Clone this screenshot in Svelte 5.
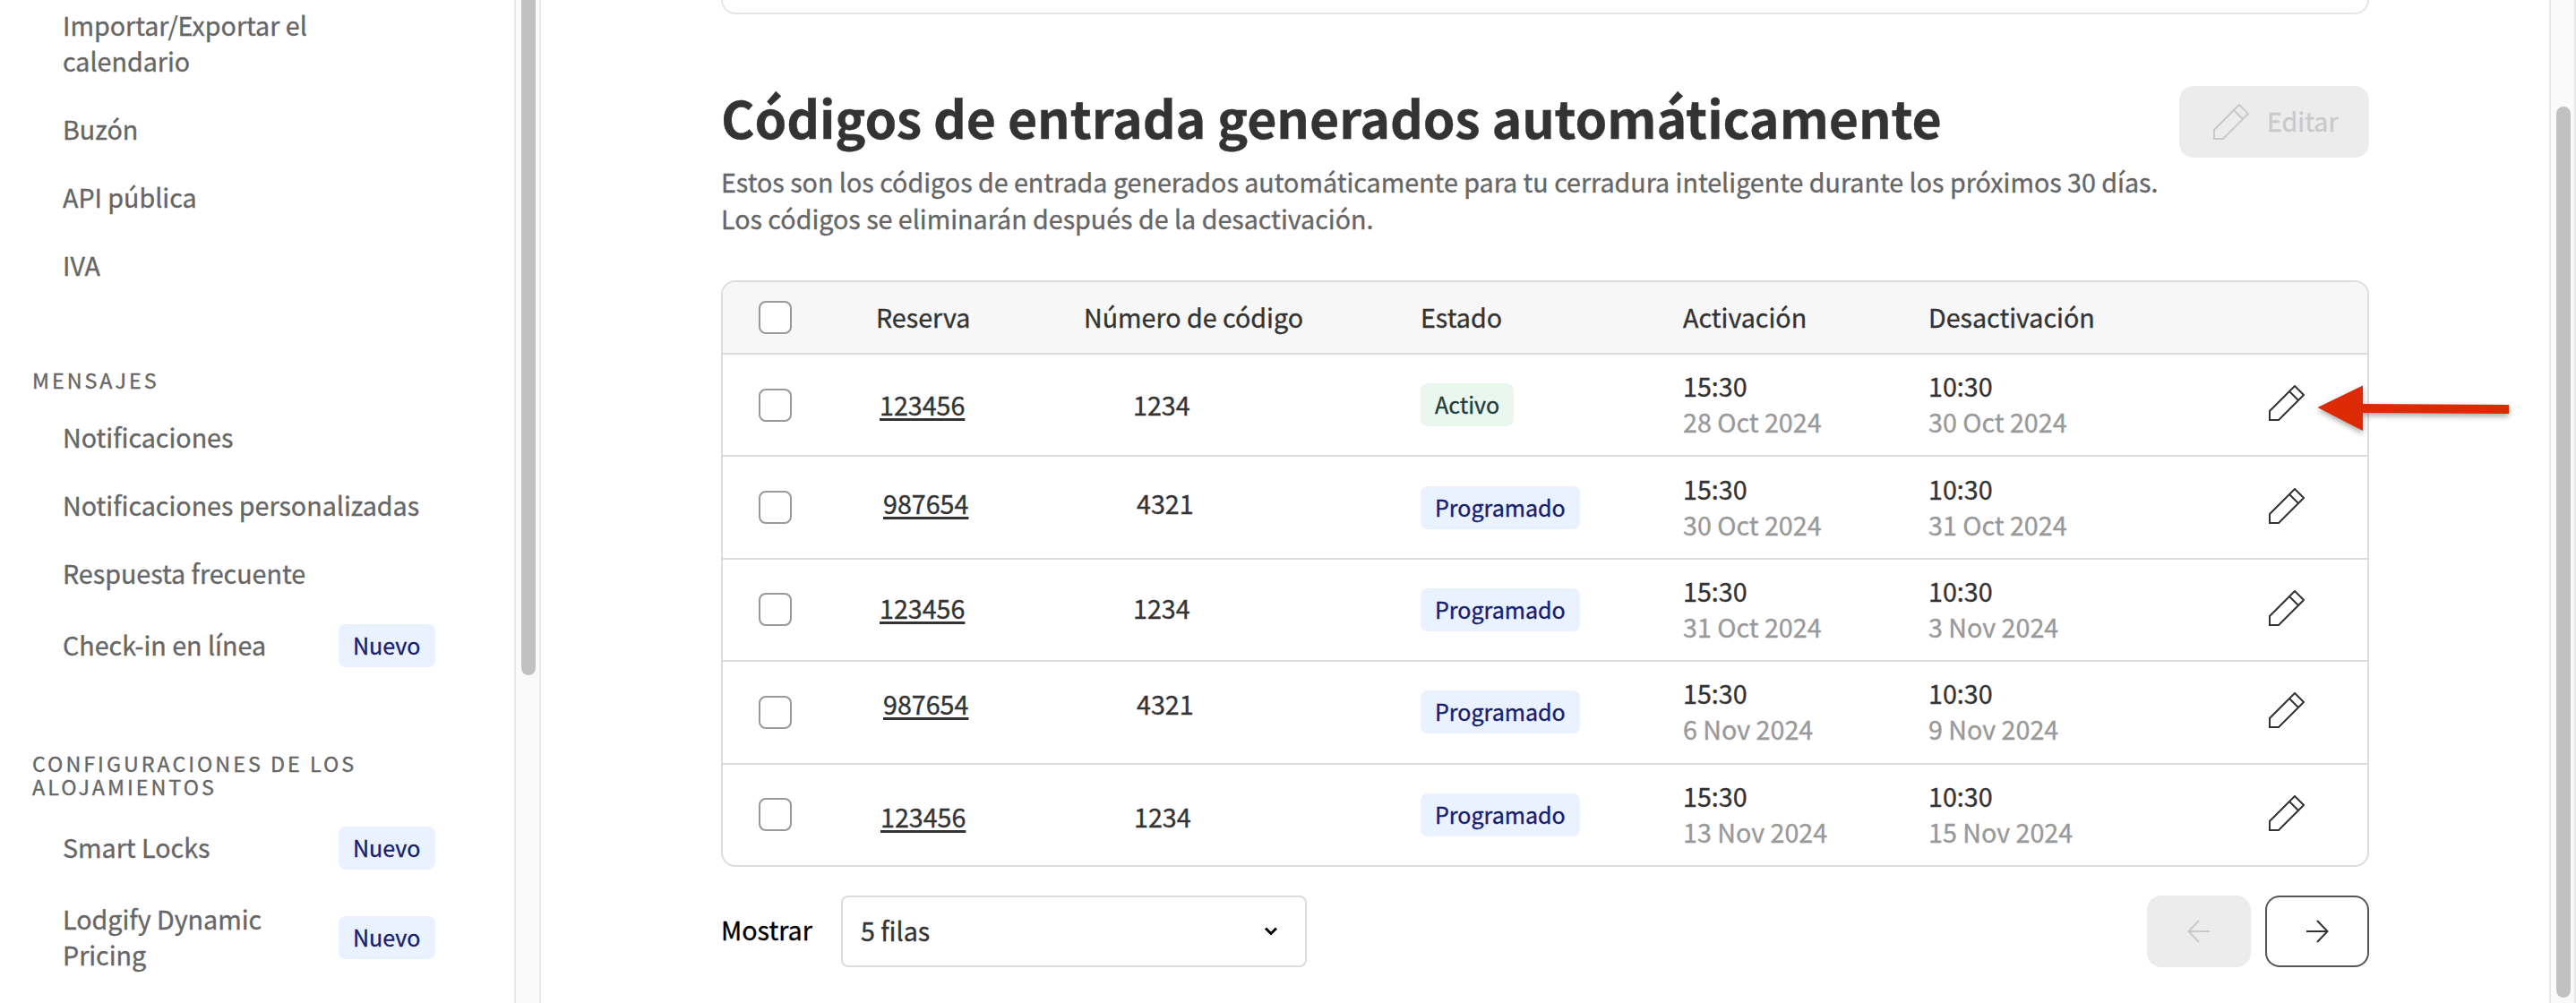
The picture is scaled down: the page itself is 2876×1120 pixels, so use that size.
<script>
  const menu = [
    {
      items: [
        { label: 'Importar/Exportar el calendario' },
        { label: 'Buzón' },
        { label: 'API pública' },
        { label: 'IVA' }
      ]
    },
    {
      title: 'Mensajes',
      items: [
        { label: 'Notificaciones' },
        { label: 'Notificaciones personalizadas' },
        { label: 'Respuesta frecuente' },
        { label: 'Check-in en línea', isNew: true }
      ]
    },
    {
      title: 'Configuraciones de los alojamientos',
      items: [
        { label: 'Smart Locks', isNew: true },
        { label: 'Lodgify Dynamic Pricing', isNew: true }
      ]
    }
  ]

  const columns = ['Reserva', 'Número de código', 'Estado', 'Activación', 'Desactivación']

  // dx / dy nudge the booking and code values inside their cells
  const rows = [
    { booking: '123456', code: '1234', active: true, from: '28 Oct 2024', to: '30 Oct 2024', dx: 0, dy: 0 },
    { booking: '987654', code: '4321', from: '30 Oct 2024', to: '31 Oct 2024', dx: 4, dy: -5 },
    { booking: '123456', code: '1234', from: '31 Oct 2024', to: '3 Nov 2024', dx: 0, dy: -2 },
    { booking: '987654', code: '4321', from: '6 Nov 2024', to: '9 Nov 2024', dx: 4, dy: -9 },
    { booking: '123456', code: '1234', from: '13 Nov 2024', to: '15 Nov 2024', dx: 1, dy: 2 }
  ]
</script>

{#snippet pencil()}
  <svg class="pencil" viewBox="0 0 40 40">
    <path d="M1 39V29L29 1L39 11L11 39ZM23 7L33 17" />
  </svg>
{/snippet}

<div class="page">
  <nav class="sidebar">
    {#each menu as group}
      {#if group.title}
        <h2>{group.title}</h2>
      {/if}
      {#each group.items as item}
        <div class="item">
          <span class="label" class:narrow={item.isNew}>{item.label}</span>
          {#if item.isNew}
            <span class="badge new">Nuevo</span>
          {/if}
        </div>
      {/each}
    {/each}
  </nav>
  <div class="track side-track"><div class="thumb"></div></div>

  <main>
    <div class="card-end"></div>

    <header>
      <h1>Códigos de entrada generados automáticamente</h1>
      <button class="edit" disabled>{@render pencil()}<span>Editar</span></button>
    </header>
    <p>
      Estos son los códigos de entrada generados automáticamente para tu cerradura inteligente durante los próximos 30 días.<br />
      Los códigos se eliminarán después de la desactivación.
    </p>

    <div class="table">
      <div class="row head">
        <i class="check"></i>
        {#each columns as column}
          <span class="text">{column}</span>
        {/each}
      </div>
      {#each rows as row}
        <div class="row">
          <i class="check"></i>
          <span class="booking" style="transform: translate({row.dx}px, {row.dy}px)">{row.booking}</span>
          <span class="code" style="transform: translate({row.dx}px, {row.dy}px)">{row.code}</span>
          <span class="badge" class:active={row.active}>{row.active ? 'Activo' : 'Programado'}</span>
          <span class="text">15:30<br /><small>{row.from}</small></span>
          <span class="text">10:30<br /><small>{row.to}</small></span>
          {@render pencil()}
        </div>
      {/each}
      <svg class="pointer" viewBox="0 0 230 70">
        <path d="M7.5 35L58 10.500V31L221 32V42L58 41V61Z" />
      </svg>
    </div>

    <footer>
      <span class="show">Mostrar</span>
      <div class="select">
        <span>5 filas</span>
        <svg width="16" height="12" viewBox="0 0 16 12"><path d="M2 2.500L8 8.500L14 2.500" /></svg>
      </div>
      <button class="nav" disabled>
        <svg width="26" height="26" viewBox="0 0 26 26"><path d="M25 13H2M13 1L1.500 13L13 25" /></svg>
      </button>
      <button class="nav next">
        <svg width="26" height="26" viewBox="0 0 26 26"><path d="M1 13H24M13 1L24.500 13L13 25" /></svg>
      </button>
    </footer>
  </main>
  <div class="track page-track"><div class="thumb"></div></div>
</div>

<style>
  :global(body) {
    margin: 0;
    background: #fff;
  }
  .page {
    display: flex;
    width: 2876px;
    height: 1120px;
    overflow: hidden;
    font-family: 'Noto Sans CJK SC', 'Noto Sans', sans-serif;
    font-size: 28.65px;
    line-height: 40px;
    color: #333;
    -webkit-text-stroke: 0.35px currentColor;
  }
  .page * {
    box-sizing: border-box;
  }

  .sidebar {
    width: 574px;
    flex: none;
    padding: 0 88px 0 36px;
    margin-top: -9px;
    color: #666;
  }
  .sidebar h2 {
    margin: 76px 0 14px;
    font-size: 23.3px;
    font-weight: 400;
    line-height: 26px;
    letter-spacing: 3px;
    text-transform: uppercase;
  }
  .item {
    display: flex;
    align-items: center;
    justify-content: space-between;
    padding: 18px 0 18px 34px;
  }
  .label {
    width: 400px;
    margin-top: -1px;
    margin-bottom: 1px;
  }
  .item:first-child .label {
    width: 300px;
  }
  .item .narrow {
    width: 250px;
  }

  .badge {
    flex: none;
    justify-self: start;
    height: 48px;
    padding: 0 16px;
    border-radius: 8px;
    background: #eaf2ff;
    color: #17206e;
    font-size: 25.05px;
    line-height: 46px;
  }
  .badge.active {
    background: #eaf7ee;
    color: #1f3d3d;
  }
  .badge.new {
    width: 108px;
  }

  .track {
    flex: none;
    width: 30px;
    background: #fafafa;
    border: solid #e8e8e8;
    border-width: 0 2px;
  }
  .thumb {
    width: 16px;
    margin-left: 6px;
    background: #c1c1c1;
    border-radius: 8px;
  }
  .side-track .thumb {
    height: 754px;
    border-radius: 0 0 8px 8px;
  }
  .page-track {
    padding-top: 119px;
  }
  .page-track .thumb {
    height: 995px;
  }

  main {
    flex: 1;
    padding: 0 201px;
  }
  .card-end {
    height: 16px;
    border: 2px solid #e5e5e5;
    border-top: 0;
    border-radius: 0 0 16px 16px;
  }
  header {
    display: flex;
    justify-content: space-between;
    margin-top: 80px;
    height: 80px;
  }
  h1 {
    margin: 0;
    font-size: 57.3px;
    line-height: 70px;
    font-weight: 700;
    letter-spacing: -0.1px;
    white-space: nowrap;
  }
  button {
    display: flex;
    align-items: center;
    border: 0;
    border-radius: 16px;
    font: inherit;
    background: #ececec;
    color: #c9c9c9;
  }
  .edit {
    width: 212px;
    padding: 0 0 0 38px;
    gap: 20px;
  }
  .edit span {
    margin-top: -2px;
  }
  svg {
    fill: none;
    stroke: currentColor;
    stroke-width: 2;
  }
  .pencil {
    width: 40px;
    height: 40px;
  }
  p {
    margin: 6px 0 0;
    color: #666;
    line-height: 41px;
    white-space: nowrap;
  }

  .table {
    position: relative;
    margin-top: 49px;
    border: 2px solid #dcdcdc;
    border-radius: 16px;
  }
  .row {
    display: grid;
    grid-template-columns: 171px 232px 376px 293px 274px 380px 1fr;
    align-items: center;
    height: 114.4px;
    border-bottom: 2px solid #dcdcdc;
  }
  .head {
    height: 81px;
    border-radius: 14px 14px 0 0;
    background: #f7f7f7;
  }
  .row:nth-child(6) {
    height: 112.4px;
    border-bottom: 0;
  }
  .check {
    width: 37px;
    height: 37px;
    margin-left: 40px;
    border: 2px solid #999;
    border-radius: 8px;
    background: #fff;
  }
  .text {
    margin-top: -2px;
  }
  small {
    font-size: inherit;
    color: #999;
  }
  .booking {
    justify-self: start;
    margin-left: 4px;
    text-decoration: underline;
    text-decoration-thickness: 3px;
    text-underline-offset: 3px;
  }
  .code {
    margin-left: 55px;
  }
  .row > .pencil {
    margin-top: -4px;
  }
  .pointer {
    position: absolute;
    left: 1773px;
    top: 105px;
    width: 230px;
    height: 70px;
    fill: #dc2b04;
    stroke: none;
    filter: drop-shadow(0 3px 3px rgba(0, 0, 0, 0.35));
  }

  footer {
    display: flex;
    align-items: center;
    gap: 16px;
    margin-top: 32px;
    color: #333;
  }
  .show {
    width: 118px;
    margin-top: -3px;
    color: #000;
  }
  .select {
    display: flex;
    align-items: center;
    justify-content: space-between;
    width: 520px;
    height: 80px;
    margin-right: auto;
    padding: 0 30px 0 20px;
    border: 2px solid #dcdcdc;
    border-radius: 8px;
  }
  .select span {
    margin-top: -2px;
  }
  .select svg {
    stroke: #000;
    stroke-width: 3;
  }
  .nav {
    justify-content: center;
    width: 116px;
    height: 80px;
  }
  .next {
    border: 2px solid #555;
    background: #fff;
    color: #333;
  }
</style>
